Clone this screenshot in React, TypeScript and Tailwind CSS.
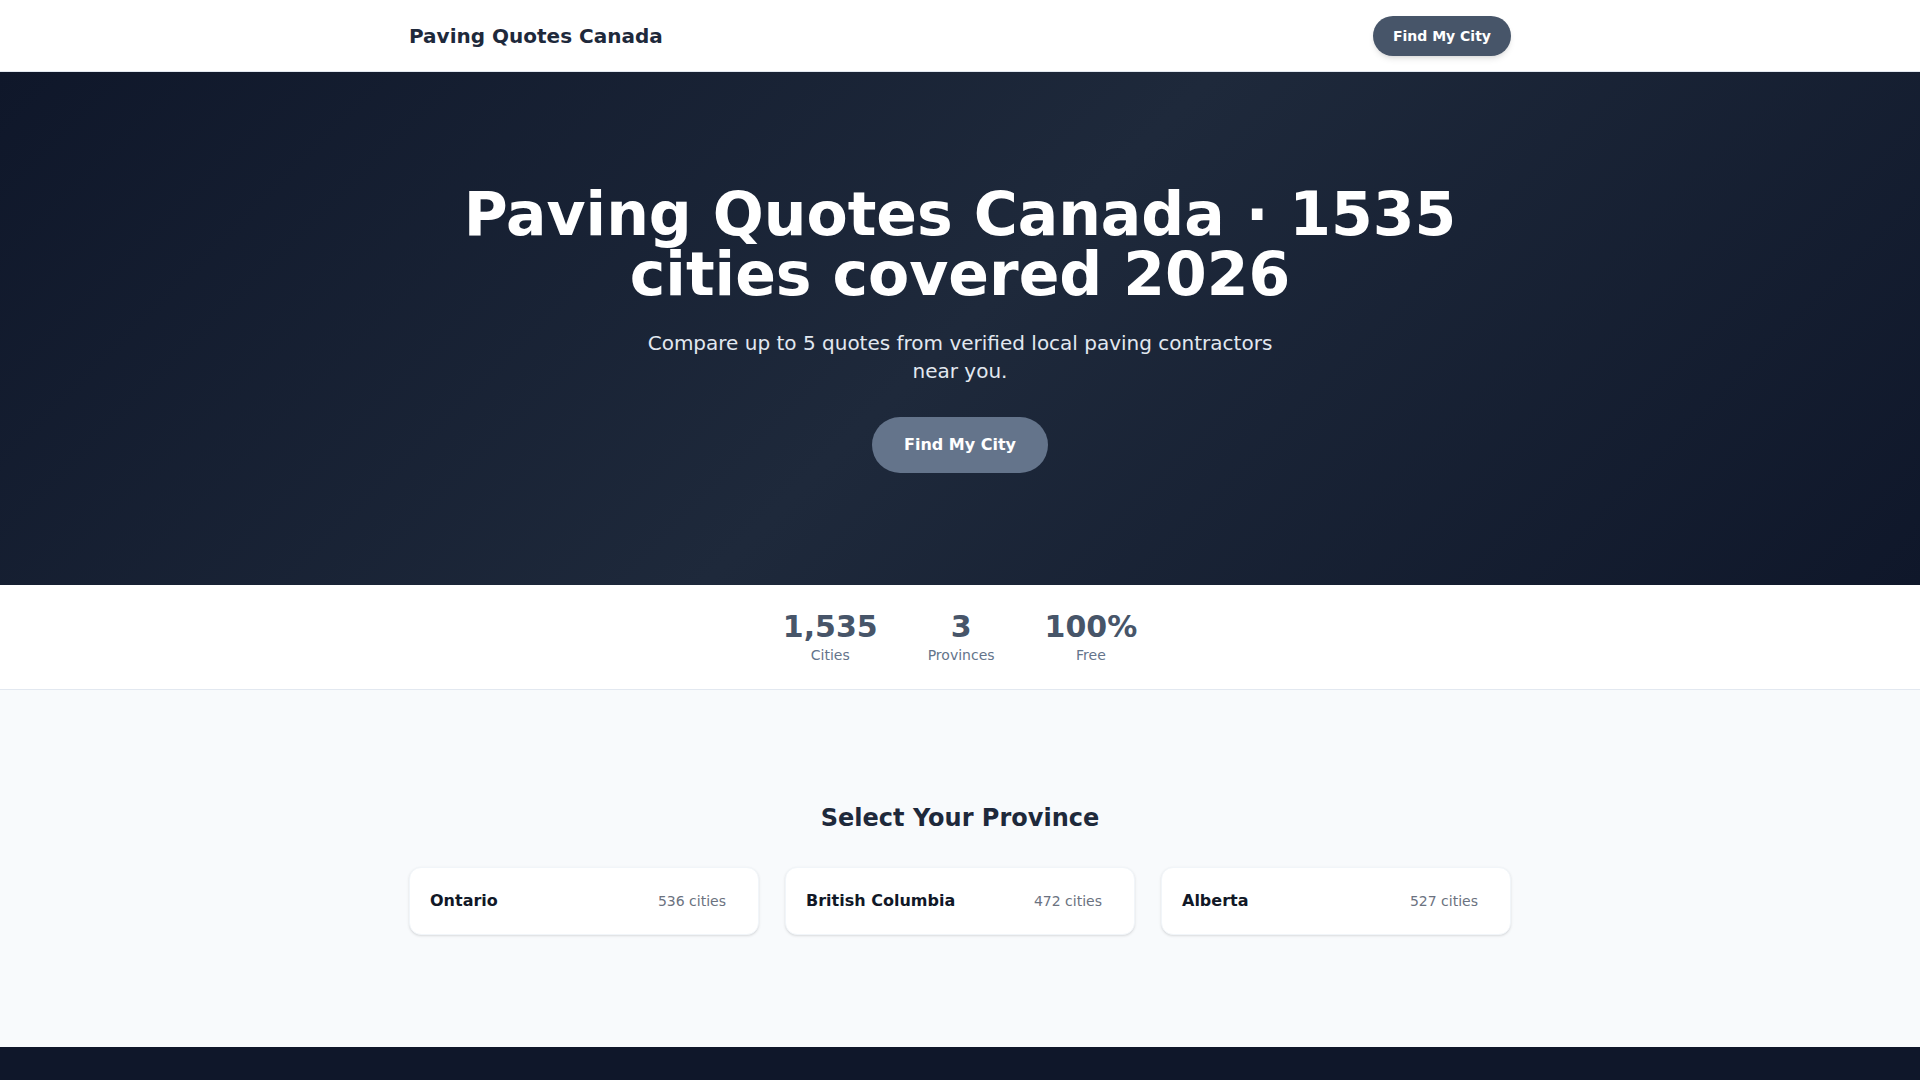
import React from "react";

const provinces = [
  { name: "Ontario", cities: 536 },
  { name: "British Columbia", cities: 472 },
  { name: "Alberta", cities: 527 },
];

const stats = [
  { value: "1,535", label: "Cities" },
  { value: "3", label: "Provinces" },
  { value: "100%", label: "Free" },
];

export default function App() {
  return (
    <div className="min-h-screen bg-[#f8fafc] font-['DejaVu_Sans',sans-serif]">
      {/* Top bar */}
      <header className="bg-white border-b border-[#e2e8f0]">
        <div className="w-[1102px] mx-auto h-[71px] flex items-center justify-between">
          <span className="text-xl font-bold text-[#1e293b]">Paving Quotes Canada</span>
          <button className="bg-[#475569] text-white text-sm font-bold px-5 py-2.5 leading-5 rounded-full shadow-md">
            Find My City
          </button>
        </div>
      </header>

      {/* Hero */}
      <section className="bg-[linear-gradient(135deg,#0f172a_0%,#1e293b_50%,#0f172a_100%)] pt-28 pb-28 text-center">
        <h1 className="max-w-5xl mx-auto text-[60px] leading-[60px] font-bold text-white">
          Paving Quotes Canada · 1535 cities covered 2026
        </h1>
        <p className="max-w-2xl mx-auto mt-[25px] text-xl leading-7 text-[#e2e8f0]">
          Compare up to 5 quotes from verified local paving contractors near you.
        </p>
        <button className="mt-8 bg-[#64748b] text-white font-bold px-8 py-4 leading-6 rounded-full">
          Find My City
        </button>
      </section>

      {/* Stats strip */}
      <section className="bg-white border-b border-[#e2e8f0] py-6">
        <div className="flex justify-center gap-[50px]">
          {stats.map((s) => (
            <div key={s.label} className="text-center">
              <div className="text-3xl font-bold text-[#475569]">{s.value}</div>
              <div className="text-sm leading-5 text-[#64748b]">{s.label}</div>
            </div>
          ))}
        </div>
      </section>

      {/* Provinces */}
      <section className="py-28">
        <h2 className="text-2xl font-bold text-[#1e293b] text-center mb-[33px]">Select Your Province</h2>
        <div className="w-[1102px] mx-auto grid grid-cols-3 gap-[26px]">
          {provinces.map((p) => (
            <a
              key={p.name}
              href="#"
              className="flex items-center justify-between bg-white rounded-xl border border-[#f1f5f9] shadow-sm pl-5 pr-8 py-[21px]"
            >
              <span className="font-bold text-[#111827] leading-6">{p.name}</span>
              <span className="text-sm text-[#6b7280]">{p.cities} cities</span>
            </a>
          ))}
        </div>
      </section>

      <footer className="bg-[#0f172a] h-40" />
    </div>
  );
}
